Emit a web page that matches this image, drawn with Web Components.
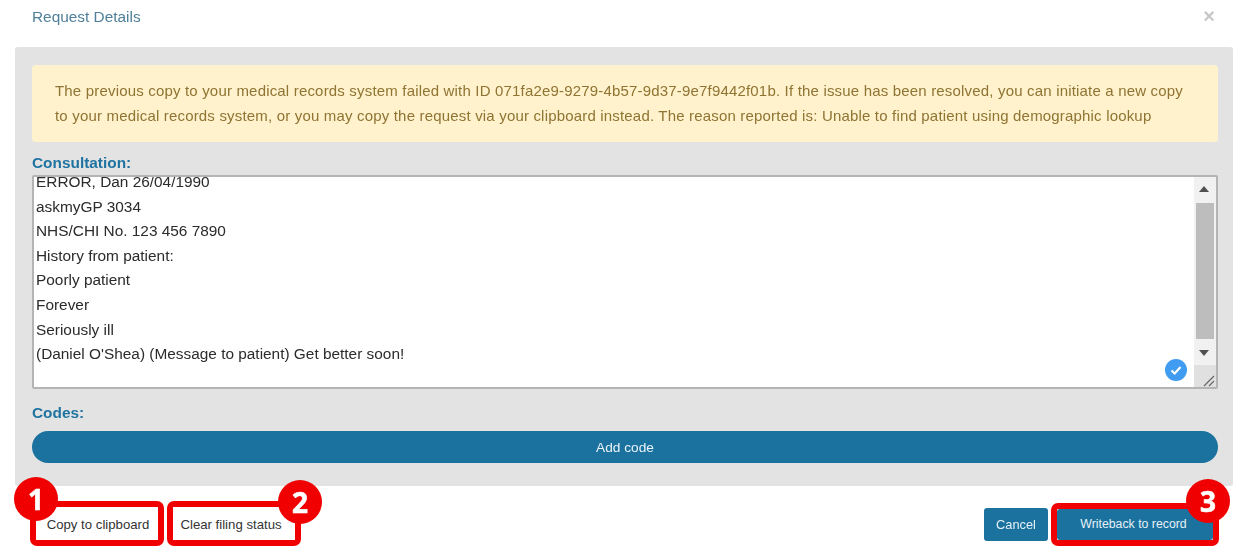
<!DOCTYPE html>
<html>
<head>
<meta charset="utf-8">
<title>Request Details</title>
<style>
  html, body { margin: 0; background: #fff; }
  body { font-family: "Liberation Sans", Arial, sans-serif; color: #333; width: 1252px; height: 559px; overflow: hidden; }
</style>
</head>
<body>
<request-modal>
  <span slot="title">Request Details</span>
  <alert-box>The previous copy to your medical records system failed with ID 071fa2e9-9279-4b57-9d37-9e7f9442f01b. If the issue has been resolved, you can initiate a new copy to your medical records system, or you may copy the request via your clipboard instead. The reason reported is: Unable to find patient using demographic lookup</alert-box>
  <field-label>Consultation:</field-label>
  <consult-box>
    <div>ERROR, Dan 26/04/1990</div>
    <div>askmyGP 3034</div>
    <div>NHS/CHI No. 123 456 7890</div>
    <div>History from patient:</div>
    <div>Poorly patient</div>
    <div>Forever</div>
    <div>Seriously ill</div>
    <div>(Daniel O'Shea) (Message to patient) Get better soon!</div>
  </consult-box>
  <field-label class="codes">Codes:</field-label>
  <action-button kind="pill">Add code</action-button>

  <callout-frame slot="left" badge="1" bx="-22" by="-30">
    <action-button kind="plain" style="width:122px;height:33px;padding:2px 0 0 2px">Copy to clipboard</action-button>
  </callout-frame>
  <callout-frame slot="left" badge="2" bx="105" by="-27">
    <action-button kind="plain" style="width:122px;height:33px;padding:2px 6px 0 0">Clear filing status</action-button>
  </callout-frame>
  <action-button slot="right" kind="primary" style="width:64px;height:33px;margin-top:7px;font-size:12.8px">Cancel</action-button>
  <callout-frame slot="right" badge="3" bx="129" by="-30" style="margin-top:2px">
    <action-button kind="primary" style="width:156px;height:31px;padding:0 3px 2px 0;font-size:12.3px">Writeback to record</action-button>
  </callout-frame>
</request-modal>

<script>
const define = (name, css, html) => {
  customElements.define(
    name,
    class extends HTMLElement {
      connectedCallback() {
        if (this.shadowRoot) return;
        const shadow = this.attachShadow({ mode: "open" });
        shadow.innerHTML = `<style>${css}</style>${typeof html === "function" ? html(this) : html}`;
      }
    }
  );
};

define("request-modal", `
  :host { display: block; filter: blur(0.45px); }
  header {
    height: 47px; box-sizing: border-box; padding: 8px 37px 0 32px;
    display: flex; justify-content: space-between; align-items: flex-start;
    font-size: 15.4px; line-height: 17px; color: #4f7f99;
  }
  .close { font-size: 20px; font-weight: bold; line-height: 14px; margin-top: 1px; color: #c8c8c8; }
  .panel {
    margin: 0 19px 0 15px; padding: 18px 15px 23px 17px;
    background: #e3e3e3; border-radius: 3px;
    display: flex; flex-direction: column;
  }
  footer {
    height: 73px; box-sizing: border-box; padding: 15px 33px 0 30px;
    display: flex; justify-content: space-between; align-items: flex-start;
  }
  .group { display: flex; gap: 3px; align-items: flex-start; }
`, `
  <header><slot name="title"></slot><span class="close">×</span></header>
  <div class="panel"><slot></slot></div>
  <footer>
    <div class="group"><slot name="left"></slot></div>
    <div class="group"><slot name="right"></slot></div>
  </footer>
`);

define("alert-box", `
  :host {
    display: block; box-sizing: border-box; height: 77px; padding: 13px 23px 0;
    background: #fff2cc; border-radius: 4px;
    color: #8f7433; font-size: 15px; line-height: 25px; letter-spacing: 0.18px;
  }
`, `<slot></slot>`);

define("field-label", `
  :host {
    display: block; margin-top: 12px; height: 21px;
    color: #1f73a1; font-size: 15.4px; font-weight: bold; line-height: 18px;
  }
  :host(.codes) { margin-top: 15px; height: 27px; }
`, `<slot></slot>`);

define("consult-box", `
  :host {
    display: flex; box-sizing: border-box; height: 214px; position: relative;
    background: #fff; border: 2px solid #b4b4b4; border-radius: 2px;
  }
  .text { flex: 1; overflow: hidden; padding-left: 2px; color: #2b2b2b; font-size: 15.4px; line-height: 24.6px; }
  .text div { margin-top: -7px; }
  .bar { width: 22px; display: flex; flex-direction: column; background: #f1f1f1; }
  .arrow { height: 26px; box-sizing: border-box; display: flex; align-items: center; justify-content: center; padding: 0 2px 3px 0; }
  .arrow.down { padding: 2px 2px 0 0; }
  .arrow i { width: 0; height: 0; border: 5px solid transparent; border-top: 0; border-bottom: 6px solid #505050; }
  .arrow.down i { transform: rotate(180deg); }
  .thumb { flex: 1; background: #bdbdbd; margin: 0 2px; }
  .corner { height: 22px; background: #e0e0e0; display: flex; align-items: flex-end; justify-content: flex-end; }
  .tick { position: absolute; right: 29px; bottom: 6px; width: 22px; height: 22px; }
`, `
  <div class="text"><div><slot></slot></div></div>
  <div class="bar">
    <div class="arrow"><i></i></div>
    <div class="thumb"></div>
    <div class="arrow down"><i></i></div>
    <div class="corner">
      <svg width="14" height="14" viewBox="0 0 14 14" fill="none" stroke="#666" stroke-width="1.2">
        <path d="M2 13 L12 3 M7 13 L12 8"/>
      </svg>
    </div>
  </div>
  <svg class="tick" viewBox="0 0 22 22">
    <circle cx="11" cy="11" r="11" fill="#3f9cf1"/>
    <path d="M6.5 11.5 L9.7 14.5 L15.5 8" fill="none" stroke="#fff" stroke-width="2.2"/>
  </svg>
`);

define("action-button", `
  :host {
    display: flex; align-items: center; justify-content: center; box-sizing: border-box;
    font-size: 13.2px; height: 32px; white-space: nowrap;
  }
  :host([kind="pill"]) { background: #1b729f; color: #eaf3f8; border-radius: 16px; font-size: 13.7px; }
  :host([kind="primary"]) { background: #1b729f; color: #e6f0f6; border-radius: 3px; }
  :host([kind="plain"]) { background: #fff; color: #333; }
`, `<slot></slot>`);

define("callout-frame", `
  :host {
    display: block; position: relative; box-sizing: border-box;
    border: 6px solid #f00000; border-radius: 7px; background: #fff;
  }
  .badge {
    position: absolute; width: 44px; height: 44px; border-radius: 50%;
    background: #f00000; color: #fff;
    display: flex; align-items: center; justify-content: center;
    font-family: "Open Sans", sans-serif; font-size: 28px; font-weight: 700; line-height: 1;
    -webkit-text-stroke: 0.6px #fff;
  }
`, (el) => `
  <slot></slot>
  <span class="badge" style="left:${el.getAttribute("bx")}px;top:${el.getAttribute("by")}px">${el.getAttribute("badge")}</span>
`);
</script>
</body>
</html>
